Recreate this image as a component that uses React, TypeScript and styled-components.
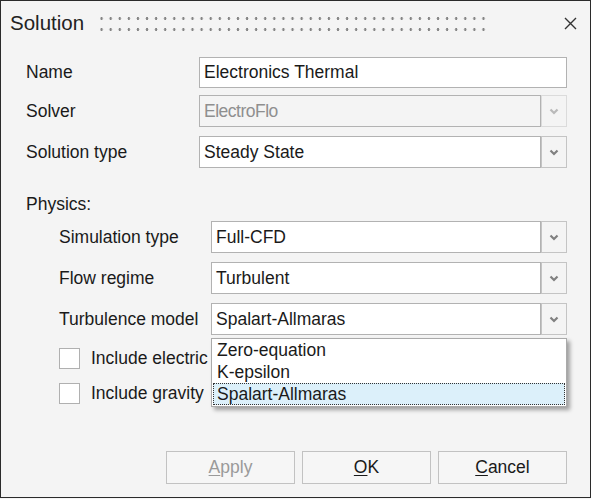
import React from "react";
import styled, { createGlobalStyle } from "styled-components";

const Global = createGlobalStyle`
  html, body { margin: 0; padding: 0; background: #f4f4f4; }
  * { box-sizing: border-box; }
  body { font-family: "Liberation Sans", Arial, sans-serif; font-size: 17.5px; color: #1a1a1a; }
`;

const Window = styled.div`
  width: 591px;
  height: 498px;
  border: 1px solid #2b2b2b;
  background: #f4f4f4;
  display: flex;
  flex-direction: column;
  position: relative;
  overflow: hidden;
`;

const TitleBar = styled.div`
  height: 44px;
  display: flex;
  align-items: center;
  padding: 0 12px 0 9px;
`;

const Title = styled.div`
  font-size: 20.5px;
  color: #222;
  width: 90px;
`;

const Grip = styled.div`
  width: 388px;
  height: 16px;
  background-image: radial-gradient(circle, #858585 1.1px, transparent 1.5px);
  background-size: 9.1px 11px;
  background-position: -3px -2px;
`;

const Close = styled.div`
  margin-left: auto;
  width: 16px;
  height: 16px;
  display: flex;
  align-items: center;
  justify-content: center;
`;

const Body = styled.div`
  flex: 1;
  display: flex;
  flex-direction: column;
  padding: 12px 23px 0 25px;
`;

const Row = styled.div<{ $indent?: number; $mt?: number; $label?: number }>`
  display: grid;
  grid-template-columns: ${(p) => p.$label ?? 173}px 1fr;
  align-items: center;
  margin-top: ${(p) => p.$mt ?? 0}px;
  padding-left: ${(p) => p.$indent ?? 0}px;
`;

const Label = styled.div`
  white-space: nowrap;
`;

const TextInput = styled.div`
  height: 31px;
  border: 1px solid #b2b2b2;
  background: #fff;
  display: flex;
  align-items: center;
  padding-left: 4px;
`;

const SelectWrap = styled.div`
  position: relative;
  display: flex;
  height: 32px;
`;

const SelectField = styled.div<{ $disabled?: boolean }>`
  flex: 1;
  border: 1px solid #b2b2b2;
  background: ${(p) => (p.$disabled ? "#f4f4f4" : "#fff")};
  color: ${(p) => (p.$disabled ? "#8f8f8f" : "#1a1a1a")};
  display: flex;
  align-items: center;
  padding-left: 4px;
  letter-spacing: ${(p) => (p.$disabled ? "-0.5px" : "0")};
`;

const SelectButton = styled.div<{ $disabled?: boolean }>`
  width: 26px;
  border: 1px solid #c4c4c4;
  background: #f4f4f4;
  display: flex;
  align-items: center;
  justify-content: center;
  opacity: ${(p) => (p.$disabled ? 0.5 : 1)};
`;

const Section = styled.div`
  margin-top: 25px;
  height: 22px;
  display: flex;
  align-items: center;
`;

const List = styled.div`
  position: absolute;
  left: 0;
  right: 0;
  top: 35px;
  background: #fff;
  border: 1px solid #aaaaaa;
  box-shadow: 3px 3px 4px rgba(0, 0, 0, 0.35);
  display: flex;
  flex-direction: column;
  z-index: 5;
  padding: 0 1px 1px;
`;

const Item = styled.div<{ $selected?: boolean }>`
  height: 22px;
  display: flex;
  align-items: center;
  padding-left: 3px;
  background: ${(p) => (p.$selected ? "#dcf0fa" : "transparent")};
  border: 1px ${(p) => (p.$selected ? "dotted #333" : "solid transparent")};
`;

const CheckRow = styled.div<{ $mt: number }>`
  display: flex;
  align-items: center;
  gap: 11px;
  padding-left: 33px;
  margin-top: ${(p) => p.$mt}px;
  height: 21px;
  white-space: nowrap;
`;

const Box = styled.div`
  flex: none;
  width: 21px;
  height: 21px;
  border: 1px solid #b0b0b0;
  background: #fff;
`;

const Buttons = styled.div`
  display: flex;
  justify-content: flex-end;
  gap: 7px;
  margin-top: 47px;
`;

const Button = styled.div<{ $disabled?: boolean }>`
  width: 129px;
  height: 33px;
  border: 1px solid #c2c2c2;
  background: #f6f6f6;
  display: flex;
  align-items: center;
  justify-content: center;
  color: ${(p) => (p.$disabled ? "#9a9a9a" : "#1a1a1a")};
  u { text-underline-offset: 2px; }
`;

const Chevron = () => (
  <svg width="10" height="7" viewBox="0 0 10 7">
    <path d="M1.5 1.5 L5 5 L8.5 1.5" fill="none" stroke="#808080" strokeWidth="2.2" />
  </svg>
);

const Select: React.FC<{ value: string; disabled?: boolean; children?: React.ReactNode }> = ({
  value,
  disabled,
  children,
}) => (
  <SelectWrap>
    <SelectField $disabled={disabled}>{value}</SelectField>
    <SelectButton $disabled={disabled}>
      <Chevron />
    </SelectButton>
    {children}
  </SelectWrap>
);

export default function App() {
  return (
    <>
      <Global />
      <Window>
        <TitleBar>
          <Title>Solution</Title>
          <Grip />
          <Close>
            <svg width="13" height="13" viewBox="0 0 13 13">
              <path d="M1 1 L12 12 M12 1 L1 12" stroke="#333" strokeWidth="1.4" />
            </svg>
          </Close>
        </TitleBar>
        <Body>
          <Row>
            <Label>Name</Label>
            <TextInput>Electronics Thermal</TextInput>
          </Row>
          <Row $mt={7}>
            <Label>Solver</Label>
            <Select value="ElectroFlo" disabled />
          </Row>
          <Row $mt={9}>
            <Label>Solution type</Label>
            <Select value="Steady State" />
          </Row>
          <Section>Physics:</Section>
          <Row $mt={6} $indent={33} $label={152}>
            <Label>Simulation type</Label>
            <Select value="Full-CFD" />
          </Row>
          <Row $mt={9} $indent={33} $label={152}>
            <Label>Flow regime</Label>
            <Select value="Turbulent" />
          </Row>
          <Row $mt={9} $indent={33} $label={152}>
            <Label>Turbulence model</Label>
            <Select value="Spalart-Allmaras">
              <List>
                <Item>Zero-equation</Item>
                <Item>K-epsilon</Item>
                <Item $selected>Spalart-Allmaras</Item>
              </List>
            </Select>
          </Row>
          <CheckRow $mt={13}>
            <Box />
            <span>Include electric</span>
          </CheckRow>
          <CheckRow $mt={14}>
            <Box />
            <span>Include gravity</span>
          </CheckRow>
          <Buttons>
            <Button $disabled>
              <span>
                <u>A</u>pply
              </span>
            </Button>
            <Button>
              <span>
                <u>O</u>K
              </span>
            </Button>
            <Button>
              <span>
                <u>C</u>ancel
              </span>
            </Button>
          </Buttons>
        </Body>
      </Window>
    </>
  );
}
